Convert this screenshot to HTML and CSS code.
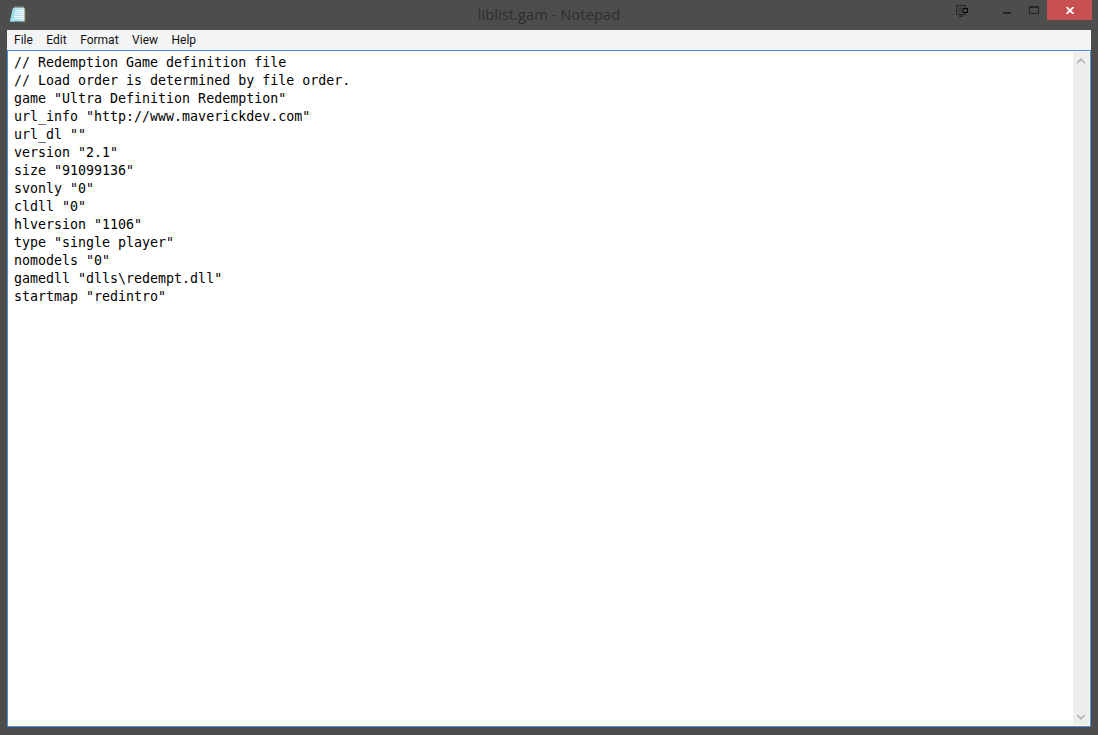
FILE: index.html
```html
<!DOCTYPE html>
<html lang="en">
<head>
<meta charset="utf-8">
<title>liblist.gam - Notepad</title>
<link rel="stylesheet" href="styles.css">
</head>
<body>
<div class="window">
  <header class="titlebar">
    <svg class="app-icon" width="16" height="17" viewBox="0 0 16 17">
      <defs>
        <linearGradient id="page" x1="0" y1="0" x2="1" y2="0">
          <stop offset="0" stop-color="#7fd0e4"/>
          <stop offset="1" stop-color="#cfeaf2"/>
        </linearGradient>
      </defs>
      <path d="M14 3h1.500v12.500H13z" fill="#8a7a55"/>
      <path d="M3 2h11.500v13.500H0z" fill="url(#page)"/>
      <path d="M5 4.500h9M4.500 6.500h9.500M4 8.500h10M3.500 10.500h10.500M3 12.500h11" stroke="#eef8fa" stroke-width="1"/>
      <path d="M3 2L0 15.500h5z" fill="#a5e0ee" opacity=".85"/>
      <path d="M5 0v3M7 0v3M9 0v3M11 0v3M13 0v3" stroke="#e8eef0" stroke-width="1"/>
      <path d="M5 0v1M7 0v1M9 0v1M11 0v1M13 0v1" stroke="#2f4a58" stroke-width="1"/>
    </svg>
    <div class="title">liblist.gam - Notepad</div>
    <div class="controls">
      <svg class="snap" width="12" height="12" viewBox="0 0 12 12">
        <path d="M.5 .5h9v9h-9z" fill="none" stroke="#252525"/>
        <path d="M3 2v6M5 2v6" stroke="#2c2c2c" stroke-width="1"/>
        <path d="M3 10.500h4v1.500H3z" fill="#252525"/>
        <path d="M7 3.500h4.500v4H7z" fill="#4d4d4d" stroke="#000" stroke-width="1"/>
      </svg>
      <svg class="min" width="8" height="2" viewBox="0 0 8 2"><path d="M0 0h8v2H0z" fill="#252525"/></svg>
      <svg class="max" width="10" height="8" viewBox="0 0 10 8"><path d="M.5 .5h9v7h-9z" fill="none" stroke="#252525"/><path d="M0 0h10v2H0z" fill="#252525"/></svg>
      <div class="close">
        <svg width="8" height="7" viewBox="0 0 8 7"><path d="M.5 0l7 7M7.500 0l-7 7" stroke="#fff" stroke-width="1.800"/></svg>
      </div>
    </div>
  </header>
  <div class="client">
    <nav class="menubar">
      <span class="menu-item">File</span>
      <span class="menu-item">Edit</span>
      <span class="menu-item">Format</span>
      <span class="menu-item">View</span>
      <span class="menu-item">Help</span>
    </nav>
    <div class="editor">
      <pre class="text">// Redemption Game definition file
// Load order is determined by file order.
game "Ultra Definition Redemption"
url_info "http://www.maverickdev.com"
url_dl ""
version "2.1"
size "91099136"
svonly "0"
cldll "0"
hlversion "1106"
type "single player"
nomodels "0"
gamedll "dlls\redempt.dll"
startmap "redintro"</pre>
      <div class="scrollbar">
        <svg width="8" height="6" viewBox="0 0 8 6"><path d="M4 0L8 4V6L4 2.500 0 6V4z" fill="#b4b4b4"/></svg>
        <svg width="8" height="6" viewBox="0 0 8 6"><path d="M4 6L8 2V0L4 3.500 0 0V2z" fill="#b4b4b4"/></svg>
      </div>
    </div>
  </div>
</div>
</body>
</html>
```
FILE: styles.css
```css
html, body {
  margin: 0;
  padding: 0;
  height: 100%;
  background: #4d4d4d;
  overflow: hidden;
}
.window {
  width: 1098px;
  height: 735px;
  display: flex;
  flex-direction: column;
  box-sizing: border-box;
  padding: 0 7px 8px 7px;
}
.titlebar {
  height: 30px;
  flex: none;
  position: relative;
  display: flex;
  align-items: center;
  justify-content: center;
}
.app-icon {
  position: absolute;
  left: 3px;
  top: 6px;
}
.title {
  font: 14.800px/1 "Open Sans", "Noto Sans", sans-serif;
  color: #2e2e2e;
  margin-top: -1px;
}
.controls {
  position: absolute;
  right: 0;
  top: 0;
  height: 20px;
  display: flex;
}
.snap { position: absolute; right: 123px; top: 5px; }
.min { position: absolute; right: 80px; top: 12px; }
.max { position: absolute; right: 52px; top: 6px; }
.close {
  position: absolute;
  right: -1px;
  top: 0;
  width: 45px;
  height: 20px;
  background: #c75050;
  display: flex;
  align-items: center;
  justify-content: center;
}
.client {
  flex: 1;
  display: flex;
  flex-direction: column;
  min-height: 0;
}
.menubar {
  height: 20px;
  flex: none;
  background: #f3f4f6;
  display: flex;
  gap: 13.500px;
  padding-left: 7px;
  align-items: center;
  font: 12px/20px Roboto, "Open Sans", sans-serif;
  color: #111;
}
.editor {
  flex: 1;
  min-height: 0;
  display: flex;
  background: #fff;
  border: 1px solid #4a90d9;
}
.text {
  flex: 1;
  margin: 0;
  padding: 3px 0 0 6px;
  font: 13.300px/18px "DejaVu Sans Mono", monospace;
  color: #000;
}
.scrollbar {
  width: 16px;
  background: #eeeeee;
  margin: 1px 1px 1px 0;
  display: flex;
  flex-direction: column;
  justify-content: space-between;
  align-items: center;
  padding: 6px 0 5px;
  box-sizing: border-box;
}
```
